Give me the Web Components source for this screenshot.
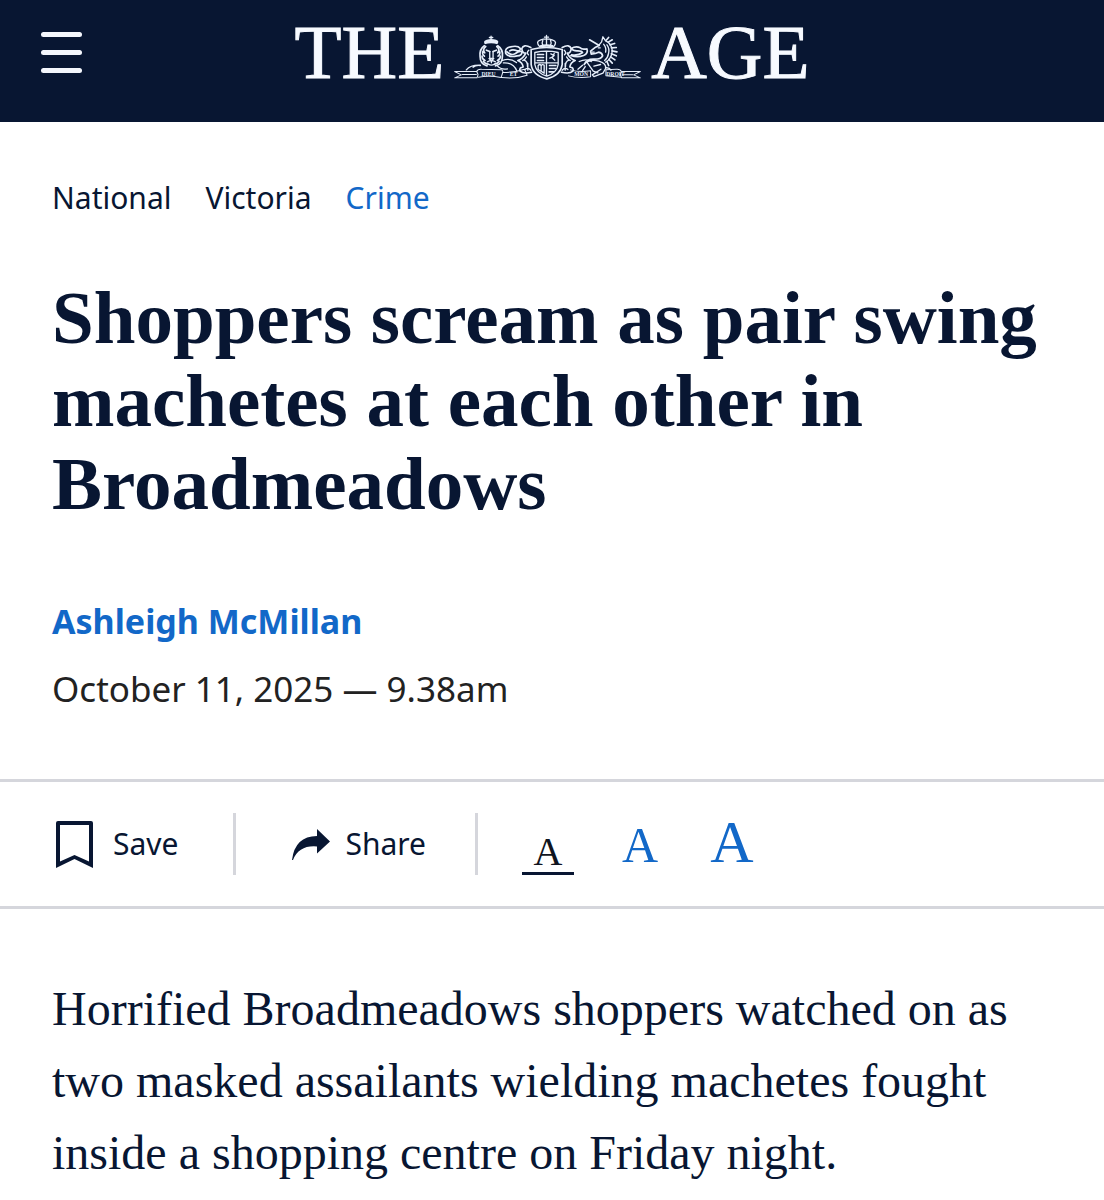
<!DOCTYPE html>
<html lang="en">
<head>
<meta charset="utf-8">
<meta name="viewport" content="width=device-width, initial-scale=1">
<title>The Age</title>
<style>
  body {
    margin: 0;
    background: #fff;
    color: #081632;
    --navy: #081632;
    --blue: #1268c8;
    --rule: #d5d6dc;
    --gutter: 52px;
    --sans: "Noto Sans", "Open Sans", sans-serif;
    --serif: "Liberation Serif", serif;
  }
</style>
</head>
<body>
<age-masthead></age-masthead>
<main>
  <age-article-head author="Ashleigh McMillan" date="October 11, 2025 — 9.38am">
    <age-crumb slot="crumbs" href="#national">National</age-crumb>
    <age-crumb slot="crumbs" href="#victoria">Victoria</age-crumb>
    <age-crumb slot="crumbs" href="#crime" current>Crime</age-crumb>
    Shoppers scream as pair swing machetes at each other in Broadmeadows
  </age-article-head>
  <age-toolbar></age-toolbar>
  <age-article-body>
    <p>Horrified Broadmeadows shoppers watched on as two masked assailants wielding machetes fought inside a shopping centre on Friday night.</p>
  </age-article-body>
</main>

<script>
'use strict';

const crestTemplate = document.createElement('template');
crestTemplate.innerHTML = `
<style>
  :host { display: block; color: #e6eefa; }
  svg { display: block; width: 187px; height: 47px; }
  text { font: bold 17px "Liberation Serif", serif; fill: currentColor; stroke: none; }
  .solid { fill: currentColor; stroke: none; }
  .fine { stroke-width: 3; }
  .bold { stroke-width: 5; }
</style>
<svg viewBox="15 25 560 140" fill="none" stroke="currentColor" stroke-width="4" stroke-linecap="round" stroke-linejoin="round" aria-hidden="true">
  <!-- ribbon -->
  <path class="fine" d="M17 137h66l4 9-3 10H17l20-9zM573 137h-56l-4 9 4 10h56l-20-9zM40 146h42M518 147h32"/>
  <path class="fine" d="M83 137q2-8 15-7l58 2q8 2 4 11l-4 12q-34-7-68-1M160 139q30 3 66-9l8 18q-34 12-76 7M516 137q-2-8-15-7l-31 2v18l46 4M364 132q24 8 60 3v18q-36 5-66-3"/>
  <!-- lion -->
  <path class="bold" d="M106 60q-15 10-13 31 0 24 21 29M146 60q16 10 14 31 0 24-21 29"/>
  <path class="bold" d="M110 62q-11 8-3 19M102 76q-4 8 4 15M99 91q0 9 9 13M103 107q5 7 13 8M143 62q11 8 3 19M151 76q4 8-4 15M154 91q0 9-9 13M150 107q-5 7-13 8"/>
  <path class="bold" d="M112 73l10 4M142 73l-10 4"/>
  <path d="M122 77v20M132 77v20M120 98h14l-7 7zM115 108q12-7 24 0M118 115q9 6 18 0M127 105v6"/>
  <path class="solid" d="M107 55q-6-10 6-13 14-5 28 0 11 3 4 13-19-5-38 0z"/>
  <path d="M126 31v10M121 35h10"/>
  <path d="M52 132q12-15 42-14M163 111q30-2 40 24M145 120q10 12 30 9M160 104q22-9 42 6M72 124q8-7 22-5"/>
  <path d="M174 78q12 13 25 5 12-9 20-5-1 12-15 12-25 6-34-7-4-17 14-20 22-5 29 4 2 9-9 8-14-6-22 0" class="bold"/>
  <!-- unicorn -->
  <path d="M421 42l29 17" class="bold"/>
  <path d="M449 59l-10 5-15 12 2 9 12-2 10-4q11 2 12 11-5 11-28 10-20 0-27 16" class="bold"/>
  <path d="M449 58l8-10 4-15 8 12q18 7 20 30-2 25-20 34M447 66h6M428 79h7"/>
  <path class="bold" d="M470 44l8-9M477 49l12-7M482 57l14-4M486 66l15-1M488 75l15 3M486 84l15 6M484 93l13 9M479 101l10 11M473 107l5 12"/>
  <path d="M473 57q8 10 5 25-2 14-12 22M463 55q9 11 6 24"/>
  <path d="M405 115q17-17 44-9 23 7 20 22l-8 14-27 10-5-5 26-17M414 110l18 26 14 5M454 116l-20 5M469 126q11-2 16 7M390 107q21-10 36 0M400 118l-14 12M408 122l-8 12"/>
  <path d="M413 69q-16 3-20-3-13-6-27 2 6 8 20 7 12 0 14 5-12 10-33 7M413 69q5 14-10 20-19 7-38 0" class="bold"/>
  <!-- mantling -->
  <path class="bold" d="M245 65q-22-12-27 4 2 14 12 13-8 17-24 22 14 5 16 19-13 2-9 13 10 9 34 3M339 65q22-12 27 4-2 14-12 13 8 17 24 22-14 5-16 19 13 2 9 13-10 9-34 3"/>
  <path d="M239 73q-8 7-1 14M232 93q-5 9-11 11M225 103q11 4 10 19M228 131q8-8 17 2M345 73q8 7 1 14M352 93q5 9 11 11M359 103q-11 4-10 19M356 131q-8-8-17 2M236 113v20M348 113v20"/>
  <!-- shield -->
  <path class="bold" d="M246 71q46-12 93 0v45q-4 32-46 43-43-11-47-43z"/>
  <path d="M257 80q35-8 70 0v36q-4 25-34 35-32-10-36-35zM292 76v74M258 111h68"/>
  <path class="bold" d="M265 86h18M265 95h18M265 104h18M301 119h19M301 128h18M300 138h13"/>
  <path d="M305 84l10 5-7 6 9 8M315 83l-4 10-9 4M268 119q3-6 8 0M267 119v12l18 11v-24q-6-4-9 2M276 121v14"/>
  <!-- crown -->
  <path d="M272 63q-14-15 1-20 18-8 38 0 15 5 2 20-20-5-41 0zM292 29v12M286 34h12M281 44q-4 7 0 14M292 43v15M304 44q4 7 0 14"/>
  <path class="bold" d="M275 60q17-4 35 0"/>
  <text x="97" y="150">DIEU</text>
  <text x="182" y="150">ET</text>
  <text x="375" y="149">MON</text>
  <text x="471" y="149">DROIT</text>
</svg>`;

class AgeCrest extends HTMLElement {
	constructor() {
		super();
		this.attachShadow({mode: 'open'}).appendChild(crestTemplate.content.cloneNode(true));
	}
}

customElements.define('age-crest', AgeCrest);

const mastheadTemplate = document.createElement('template');
mastheadTemplate.innerHTML = `
<style>
  :host { display: block; background: var(--navy); }
  header {
    display: grid;
    grid-template-columns: 1fr auto 1fr;
    align-items: start;
    box-sizing: border-box;
    min-height: 122px;
    padding: 10px 40px;
  }
  button {
    display: grid;
    gap: 13px;
    width: 43px;
    padding: 22px 0;
    border: 0;
    background: none;
  }
  button span { height: 5px; margin: 0 1px; border-radius: 3px; background: #f4f7fd; }
  a {
    display: flex;
    align-items: flex-end;
    gap: 10px;
    color: #f7faff;
    font: 77px/84px var(--serif);
    text-decoration: none;
    -webkit-text-stroke: 1px currentColor;
  }
  age-crest { padding-bottom: 13px; -webkit-text-stroke: 0; }
</style>
<header>
  <button type="button" aria-label="Menu"><span></span><span></span><span></span></button>
  <a href="#home"><span>THE</span><age-crest></age-crest><span>AGE</span></a>
</header>`;

class AgeMasthead extends HTMLElement {
	constructor() {
		super();
		this.attachShadow({mode: 'open'}).appendChild(mastheadTemplate.content.cloneNode(true));
	}
}

customElements.define('age-masthead', AgeMasthead);

class AgeCrumb extends HTMLElement {
	constructor() {
		super();
		this.attachShadow({mode: 'open'}).innerHTML = `
<style>
  :host { display: block; }
  a { color: var(--navy); font: 30px/44px var(--sans); text-decoration: none; }
  :host([current]) a { color: var(--blue); }
</style>
<a><slot></slot></a>`;
	}

	connectedCallback() {
		this.shadowRoot.querySelector('a').href = this.getAttribute('href');
	}
}

customElements.define('age-crumb', AgeCrumb);

const articleHeadTemplate = document.createElement('template');
articleHeadTemplate.innerHTML = `
<style>
  :host { display: block; padding: 54px var(--gutter) 60px; }
  nav { display: flex; flex-wrap: wrap; gap: 34px; }
  h1 { margin: 56px 0 66px; font: bold 75px/83px var(--serif); }
  .author { color: var(--blue); font: bold 34px/60px var(--sans); text-decoration: none; }
  time { display: block; margin-top: 8px; color: #222; font: 35px/60px var(--sans); }
</style>
<nav aria-label="Sections"><slot name="crumbs"></slot></nav>
<h1><slot></slot></h1>
<a class="author" href="#author"></a>
<time></time>`;

class AgeArticleHead extends HTMLElement {
	constructor() {
		super();
		this.attachShadow({mode: 'open'}).appendChild(articleHeadTemplate.content.cloneNode(true));
	}

	connectedCallback() {
		const shadow = this.shadowRoot;
		shadow.querySelector('.author').textContent = this.getAttribute('author');
		shadow.querySelector('time').textContent = this.getAttribute('date');
	}
}

customElements.define('age-article-head', AgeArticleHead);

const toolbarTemplate = document.createElement('template');
toolbarTemplate.innerHTML = `
<style>
  :host { display: block; border: solid var(--rule); border-width: 3px 0; }
  .bar { display: flex; padding: 31px var(--gutter); }
  button { padding: 0; border: 0; background: none; color: var(--navy); }
  .action {
    display: flex;
    align-items: center;
    height: 62px;
    border-right: 3px solid var(--rule);
    font: 30px/44px var(--sans);
  }
  .save { gap: 20px; padding: 0 55px 0 4px; }
  .share { gap: 14px; padding: 0 49px 0 56px; }
  svg { display: block; fill: currentColor; }
  .sizes { display: flex; align-items: flex-end; gap: 40px; padding-left: 44px; }
  .sizes button { min-width: 52px; padding-bottom: 6px; color: var(--blue); font-family: var(--serif); }
  .sizes .small { font-size: 40px; line-height: 40px; }
  .sizes .medium { font-size: 50px; line-height: 48px; }
  .sizes .large { font-size: 60px; line-height: 54px; }
  .sizes [aria-pressed="true"] { border-bottom: 3px solid var(--navy); color: #101420; padding-bottom: 0; }
</style>
<div class="bar">
  <button type="button" class="action save">
    <svg width="37" height="47" viewBox="0 0 37 47"><path d="M2 0h33q2 0 2 2v45l-18.500-9L0 47V2q0-2 2-2zm2 4v36.500l14.500-6.500L33 40.500V4z"/></svg>
    <span>Save</span>
  </button>
  <button type="button" class="action share">
    <svg width="39" height="31" viewBox="0 0 39 31"><path d="M25 0l13 12.500-13 12v-7Q7 16 1 31H0Q3 7 25 7z"/></svg>
    <span>Share</span>
  </button>
  <div class="sizes" role="group" aria-label="Text size">
    <button type="button" class="small" aria-pressed="true">A</button>
    <button type="button" class="medium" aria-pressed="false">A</button>
    <button type="button" class="large" aria-pressed="false">A</button>
  </div>
</div>`;

class AgeToolbar extends HTMLElement {
	constructor() {
		super();
		this.attachShadow({mode: 'open'}).appendChild(toolbarTemplate.content.cloneNode(true));
	}
}

customElements.define('age-toolbar', AgeToolbar);

class AgeArticleBody extends HTMLElement {
	constructor() {
		super();
		this.attachShadow({mode: 'open'}).innerHTML = `
<style>
  :host { display: block; padding: 64px var(--gutter) 0; font: 48px/72px var(--serif); }
  ::slotted(p) { margin: 0; }
</style>
<slot></slot>`;
	}
}

customElements.define('age-article-body', AgeArticleBody);
</script>
</body>
</html>
